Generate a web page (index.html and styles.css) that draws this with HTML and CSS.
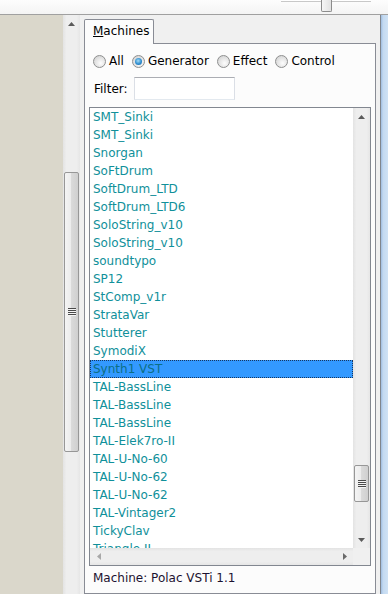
FILE: index.html
```html
<!DOCTYPE html>
<html lang="en">
<head>
    <meta charset="UTF-8">
    <meta name="viewport" content="width=device-width, initial-scale=1.0">
    <title>Machines</title>
    <link rel="stylesheet" href="styles.css">
</head>
<body>

<div class="topbar">
    <div class="slider">
        <div class="slider-track"></div>
        <div class="slider-thumb"></div>
    </div>
</div>

<div class="main">
    <div class="side"></div>

    <!-- barra de desplazamiento exterior -->
    <div class="vbar outer">
        <div class="sb-btn">
            <svg width="7" height="4" viewBox="0 0 7 4"><polygon points="0,4 3.5,0 7,4" fill="#5a5a5a"/></svg>
        </div>
        <div class="sb-thumb outer-thumb"><div class="grip"></div></div>
    </div>

    <div class="content">
        <div class="tab"><u>M</u>achines</div>
        <div class="pane">
            <div class="radios">
                <label class="radio-item"><span class="radio"></span>All</label>
                <label class="radio-item"><span class="radio on"></span>Generator</label>
                <label class="radio-item"><span class="radio"></span>Effect</label>
                <label class="radio-item"><span class="radio"></span>Control</label>
            </div>

            <div class="filter">
                <span class="filter-label">Filter:</span>
                <div class="textbox"></div>
            </div>

            <div class="listbox">
                <div class="list-body">
                    <ul class="items">
                        <li>SMT_Sinki</li>
                        <li>SMT_Sinki</li>
                        <li>Snorgan</li>
                        <li>SoFtDrum</li>
                        <li>SoftDrum_LTD</li>
                        <li>SoftDrum_LTD6</li>
                        <li>SoloString_v10</li>
                        <li>SoloString_v10</li>
                        <li>soundtypo</li>
                        <li>SP12</li>
                        <li>StComp_v1r</li>
                        <li>StrataVar</li>
                        <li>Stutterer</li>
                        <li>SymodiX</li>
                        <li class="selected">Synth1 VST</li>
                        <li>TAL-BassLine</li>
                        <li>TAL-BassLine</li>
                        <li>TAL-BassLine</li>
                        <li>TAL-Elek7ro-II</li>
                        <li>TAL-U-No-60</li>
                        <li>TAL-U-No-62</li>
                        <li>TAL-U-No-62</li>
                        <li>TAL-Vintager2</li>
                        <li>TickyClav</li>
                        <li>Triangle II</li>
                    </ul>
                    <div class="vbar">
                        <div class="sb-btn">
                            <svg width="7" height="4" viewBox="0 0 7 4"><polygon points="0,4 3.5,0 7,4" fill="#5a5a5a"/></svg>
                        </div>
                        <div class="sb-thumb list-thumb"><div class="grip"></div></div>
                        <div class="sb-space"></div>
                        <div class="sb-btn">
                            <svg width="7" height="4" viewBox="0 0 7 4"><polygon points="0,0 7,0 3.5,4" fill="#5a5a5a"/></svg>
                        </div>
                    </div>
                </div>
                <div class="hbar-row">
                    <div class="hbar">
                        <div class="sb-btn">
                            <svg width="4" height="7" viewBox="0 0 4 7"><polygon points="4,0 4,7 0,3.5" fill="#a8a8a8"/></svg>
                        </div>
                        <div class="sb-space"></div>
                        <div class="sb-btn">
                            <svg width="4" height="7" viewBox="0 0 4 7"><polygon points="0,0 4,3.5 0,7" fill="#6a6a6a"/></svg>
                        </div>
                    </div>
                    <div class="corner"></div>
                </div>
            </div>

            <div class="status">Machine: Polac VSTi 1.1</div>
        </div>
    </div>

    <div class="frame"></div>
</div>

</body>
</html>
```

FILE: styles.css
```css
body {
    margin: 0;
    width: 388px;
    height: 594px;
    overflow: hidden;
    font-family: "DejaVu Sans", sans-serif;
    font-size: 12px;
    color: #000;
    background-color: #f0f0f0;
}

/* Barra superior con el deslizador */
.topbar {
    height: 14px;
    border-bottom: 1px solid #a0a0a0;
    background: linear-gradient(#fdfdfd, #f4f4f4);
}

.slider {
    position: relative;
    margin-left: 281px;
    width: 90px;
    height: 12px;
}

.slider-track {
    height: 1px;
    background-color: #fff;
    border-bottom: 1px solid #c8c8c8;
}

.slider-thumb {
    position: absolute;
    left: 40px;
    top: 0;
    width: 11px;
    height: 12px;
    box-sizing: border-box;
    border: 1px solid #8c8c8c;
    border-top: none;
    border-radius: 0 0 2px 2px;
    background: linear-gradient(to right, #f6f6f6, #e2e2e2);
}

.main {
    display: flex;
    height: 579px;
}

.side {
    width: 63px;
    background-color: #dad7cb;
}

/* Barras de desplazamiento */
.vbar {
    width: 17px;
    display: flex;
    flex-direction: column;
    background: linear-gradient(to right, #e3e3e3, #eeeeee 20%, #eeeeee 80%, #e6e6e6);
}

.sb-btn {
    width: 17px;
    height: 17px;
    flex-shrink: 0;
    display: flex;
    align-items: center;
    justify-content: center;
}

.sb-btn svg {
    display: block;
}

.sb-space {
    flex: 1;
}

.sb-thumb {
    margin: 0 1px;
    width: 15px;
    box-sizing: border-box;
    border: 1px solid #979797;
    border-radius: 2px;
    background: linear-gradient(to right, #f4f4f4, #ececec 45%, #dadada 50%, #cfcfcf);
    display: flex;
    align-items: center;
    justify-content: center;
}

.outer-thumb {
    margin-top: 140px;
    height: 280px;
}

.list-thumb {
    margin-top: 340px;
    height: 37px;
}

.grip {
    width: 8px;
    height: 8px;
    background: repeating-linear-gradient(#4a4a4a 0, #4a4a4a 1px, #f4f4f4 1px, #f4f4f4 2px);
}

.content {
    width: 300px;
    box-sizing: border-box;
    padding: 4px 4px 0 4px;
    display: flex;
    flex-direction: column;
}

.frame {
    width: 8px;
    box-sizing: border-box;
    border-left: 1px solid #80868e;
    background: linear-gradient(to right, #9fbde0, #c4daf1 30%, #cfe2f5);
}

/* Pestaña */
.tab {
    position: relative;
    z-index: 1;
    width: 70px;
    height: 25px;
    box-sizing: border-box;
    margin-bottom: -1px;
    padding-left: 8px;
    border: 1px solid #898c95;
    border-bottom: none;
    border-radius: 2px 2px 0 0;
    background-color: #fcfcfc;
    line-height: 23px;
}

.pane {
    flex: 1;
    border: 1px solid #898c95;
    background-color: #fcfcfc;
    display: flex;
    flex-direction: column;
}

.radios {
    display: flex;
    align-items: center;
    height: 13px;
    margin: 11px 0 0 8px;
}

.radio-item {
    display: flex;
    align-items: center;
    margin-right: 8px;
    line-height: 13px;
}

.radio {
    position: relative;
    width: 13px;
    height: 13px;
    box-sizing: border-box;
    margin-right: 3px;
    border: 1px solid #8e8f8f;
    border-radius: 50%;
    background: radial-gradient(circle at 60% 65%, #fdfdfd, #e2e2e2 55%, #cbcbcb);
}

.radio.on::after {
    content: "";
    position: absolute;
    left: 2px;
    top: 2px;
    width: 7px;
    height: 7px;
    border-radius: 50%;
    background: radial-gradient(circle at 45% 40%, #a6dcf5, #2f8ed0 55%, #175c9a);
}

.filter {
    display: flex;
    align-items: center;
    height: 23px;
    margin: 9px 0 0 9px;
}

.filter-label {
    width: 40px;
}

.textbox {
    width: 101px;
    height: 23px;
    box-sizing: border-box;
    border: 1px solid #dbdfe6;
    border-top-color: #abadb3;
    border-bottom-color: #e3e9ef;
    background-color: #fff;
}

/* Lista de máquinas */
.listbox {
    width: 282px;
    height: 459px;
    box-sizing: border-box;
    margin: 7px 0 0 4px;
    border: 1px solid #828790;
    background-color: #fff;
    display: flex;
    flex-direction: column;
}

.list-body {
    display: flex;
    height: 440px;
}

.items {
    flex: 1;
    margin: 0;
    padding: 0;
    list-style: none;
    overflow: hidden;
}

.items li {
    height: 18px;
    box-sizing: border-box;
    padding-left: 3px;
    line-height: 18px;
    color: #10909a;
    white-space: nowrap;
}

.items li.selected {
    padding-left: 2px;
    border: 1px dotted #17365f;
    line-height: 16px;
    background-color: #3399ff;
    color: #0b6f86;
}

.hbar-row {
    display: flex;
    height: 17px;
}

.hbar {
    flex: 1;
    display: flex;
    background: linear-gradient(#e3e3e3, #eeeeee 20%, #eeeeee 80%, #e6e6e6);
}

.corner {
    width: 17px;
    background-color: #f0f0f0;
}

.status {
    margin: 5px 0 0 8px;
    line-height: 14px;
    color: #1c1230;
}
```
